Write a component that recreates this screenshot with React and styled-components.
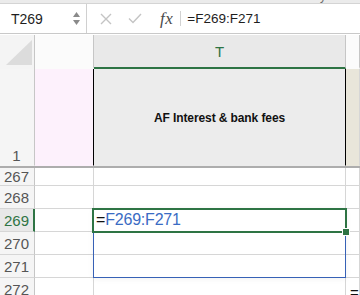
import React from 'react';
import styled, { createGlobalStyle } from 'styled-components';

const GREEN = '#2e7444';
const GRID = '#d6d6d6';
const HEAD_LINE = '#c6c6c6';

const GlobalStyle = createGlobalStyle`
  *, *::before, *::after { box-sizing: border-box; }
  html, body { margin: 0; padding: 0; background: #fff; }
  body { font-family: "Liberation Sans", Arial, sans-serif; overflow: hidden; }
`;

const Page = styled.div`
  position: relative;
  width: 360px;
  height: 295px;
  overflow: hidden;
  display: flex;
  flex-direction: column;
  background: #fff;
  & > * { flex-shrink: 0; }
`;

const RibbonStrip = styled.div`
  height: 3px;
  background: #ebebeb;
  overflow: hidden;
  padding-left: 240px;
`;

const RibbonLabel = styled.div`
  font-size: 12px;
  line-height: 12px;
  margin-top: -10px;
  color: #6a6a6a;
  white-space: nowrap;
`;

const FormulaBar = styled.div`
  height: 31px;
  display: flex;
  align-items: center;
  border-top: 1px solid #d4d4d4;
  border-bottom: 1px solid #c9c9c9;
  background: #fff;
`;

const NameBox = styled.div`
  width: 87px;
  height: 100%;
  display: flex;
  align-items: center;
  justify-content: space-between;
  padding: 0 6px 0 11px;
  border-right: 1px solid #d0d0d0;
  font-size: 14px;
  color: #1e1e1e;
`;

const Spinner = styled.div`
  display: flex;
  flex-direction: column;
  gap: 3px;
`;

const BarIcon = styled.div`
  width: ${(p) => p.$w}px;
  margin-left: ${(p) => p.$ml}px;
  display: flex;
  align-items: center;
  justify-content: center;
`;

const Fx = styled.span`
  font-family: "Liberation Serif", "Times New Roman", serif;
  font-style: italic;
  font-size: 17px;
  color: #4a4a4a;
  margin-left: 17px;
  letter-spacing: 0.5px;
`;

const BarDivider = styled.div`
  width: 1px;
  height: 15px;
  background: #d2d2d2;
  margin-left: 7px;
`;

const FormulaText = styled.div`
  margin-left: 6px;
  font-size: 13.5px;
  color: #1e1e1e;
`;

const Spacer = styled.div`
  height: 1px;
  background: #fff;
`;

const Row = styled.div`
  display: grid;
  grid-template-columns: 35px 59px 252px 14px;
  height: ${(p) => p.$h}px;
`;

const CornerCell = styled.div`
  position: relative;
  background: #f4f4f4;
  border-right: 1px solid ${HEAD_LINE};
`;

const CornerTriangle = styled.div`
  position: absolute;
  left: 6px;
  bottom: 4px;
  width: 0;
  height: 0;
  border-left: 26px solid transparent;
  border-bottom: 25px solid #dcdcdc;
`;

const ColHead = styled.div`
  background: ${(p) => (p.$selected ? '#e9e9e9' : p.$light ? '#fbfbfb' : '#f6f6f6')};
  border-right: 1px solid ${HEAD_LINE};
  border-bottom: 2px solid ${(p) => (p.$selected ? GREEN : 'transparent')};
  color: ${(p) => (p.$selected ? GREEN : '#444')};
  font-size: 15px;
  display: flex;
  align-items: center;
  justify-content: center;
  padding-top: 1px;
`;

const RowHead = styled.div`
  background: ${(p) => (p.$active ? '#e8e8e8' : '#f5f5f5')};
  border-right: ${(p) => (p.$active ? `2px solid ${GREEN}` : `1px solid ${HEAD_LINE}`)};
  border-bottom: 1px solid ${(p) => (p.$noLine ? 'transparent' : GRID)};
  color: ${(p) => (p.$active ? GREEN : '#555')};
  font-size: 15px;
  display: flex;
  align-items: ${(p) => (p.$bottom ? 'flex-end' : 'center')};
  justify-content: center;
  padding-bottom: ${(p) => (p.$bottom ? '1px' : '0')};
  padding-right: ${(p) => (p.$active ? '0' : '1px')};
`;

const Cell = styled.div`
  position: relative;
  background: ${(p) => p.$bg || '#fff'};
  border-right: 1px solid ${(p) => p.$right || GRID};
  border-bottom: 1px solid ${(p) => (p.$noLine ? 'transparent' : GRID)};
  display: flex;
  align-items: center;
  justify-content: ${(p) => (p.$center ? 'center' : 'flex-start')};
  padding-left: ${(p) => (p.$center ? 0 : 2)}px;
  white-space: nowrap;
  overflow: visible;
`;

const HeaderLabel = styled.span`
  font-size: 12px;
  font-weight: bold;
  color: #111;
  margin-top: 1px;
  letter-spacing: -0.1px;
`;

const FrozenDivider = styled.div`
  height: 2px;
  background: #adadad;
`;

const CellFormula = styled.span`
  font-size: 16px;
  color: #3a6cc4;
  letter-spacing: -0.2px;
`;

const Eq = styled.span`
  color: #111;
`;

const EditTail = styled.span`
  display: flex;
  align-items: center;
  font-size: 15px;
  color: #111;
  margin-left: 2px;
  margin-top: 6px;
`;

const Caret = styled.span`
  display: inline-block;
  width: 1px;
  height: 14px;
  background: #111;
  margin-left: 1px;
`;

const Selection = styled.div`
  position: absolute;
  left: 92px;
  top: 208px;
  width: 255px;
  height: 25px;
  border: 2px solid ${GREEN};
  pointer-events: none;
`;

const RangeBox = styled.div`
  position: absolute;
  left: 93px;
  top: 208px;
  width: 253px;
  height: 70px;
  border: 1px solid #3761b6;
  box-shadow: 0 1px 6px rgba(0, 0, 0, 0.06);
  pointer-events: none;
`;

const FillHandle = styled.div`
  position: absolute;
  left: 343px;
  top: 229px;
  width: 6px;
  height: 6px;
  background: ${GREEN};
  outline: 1px solid #fff;
`;

const dataRows = [
  { n: 267, h: 18 },
  { n: 268, h: 23 },
  { n: 269, h: 23, active: true },
  { n: 270, h: 23 },
  { n: 271, h: 23 },
  { n: 272, h: 23, tail: true },
];

export default function App() {
  return (
    <>
      <GlobalStyle />
      <Page>
        <RibbonStrip>
          <RibbonLabel>Function Library</RibbonLabel>
        </RibbonStrip>
        <FormulaBar>
          <NameBox>
            <span>T269</span>
            <Spinner>
              <svg width="7" height="5" viewBox="0 0 7 5">
                <path d="M3.5 0 L7 5 L0 5 Z" fill="#8a8a8a" />
              </svg>
              <svg width="7" height="5" viewBox="0 0 7 5">
                <path d="M0 0 L7 0 L3.5 5 Z" fill="#8a8a8a" />
              </svg>
            </Spinner>
          </NameBox>
          <BarIcon $w={14} $ml={12}>
            <svg width="12" height="12" viewBox="0 0 12 12">
              <path d="M1 1 L11 11 M11 1 L1 11" stroke="#c4c4c4" strokeWidth="1.4" fill="none" />
            </svg>
          </BarIcon>
          <BarIcon $w={16} $ml={14}>
            <svg width="14" height="11" viewBox="0 0 14 11">
              <path d="M1 5.5 L5 9.5 L13 1" stroke="#c4c4c4" strokeWidth="1.4" fill="none" />
            </svg>
          </BarIcon>
          <Fx>fx</Fx>
          <BarDivider />
          <FormulaText>=F269:F271</FormulaText>
        </FormulaBar>
        <Spacer />
        <Row $h={34}>
          <CornerCell>
            <CornerTriangle />
          </CornerCell>
          <ColHead $light />
          <ColHead $selected>T</ColHead>
          <ColHead $light />
        </Row>
        <Row $h={97}>
          <RowHead $bottom $noLine>1</RowHead>
          <Cell $bg="#fdf1fc" $right="#000" $noLine />
          <Cell $bg="#ececec" $right="#000" $noLine $center>
            <HeaderLabel>AF Interest &amp; bank fees</HeaderLabel>
          </Cell>
          <Cell $bg="#e9e6da" $noLine />
        </Row>
        <FrozenDivider />
        {dataRows.map((r) => (
          <Row key={r.n} $h={r.h}>
            <RowHead $active={r.active}>{r.n}</RowHead>
            <Cell />
            <Cell>
              {r.active && (
                <CellFormula>
                  <Eq>=</Eq>F269:F271
                </CellFormula>
              )}
            </Cell>
            <Cell>
              {r.tail && (
                <EditTail>
                  =<Caret />
                </EditTail>
              )}
            </Cell>
          </Row>
        ))}
        <RangeBox />
        <Selection />
        <FillHandle />
      </Page>
    </>
  );
}
